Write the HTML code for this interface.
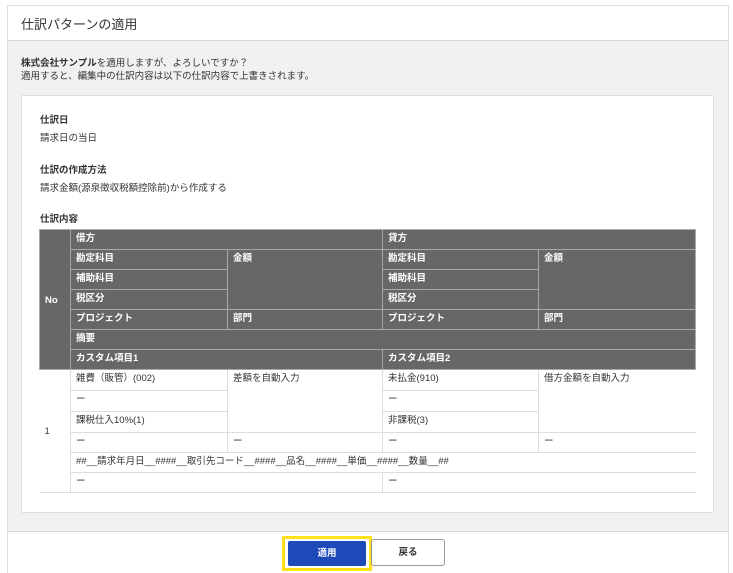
<!DOCTYPE html>
<html><head><meta charset="utf-8"><style>
*{box-sizing:border-box;margin:0;padding:0}
body{width:733px;height:573px;background:#fff;font-family:"Liberation Sans","Noto Sans CJK JP",sans-serif;color:#333;position:relative;overflow:hidden;font-size:9.5px}
.outer{position:absolute;left:7px;top:5px;width:722px;height:568px;border:1px solid #ddd;background:#f1f1f1}
.hd{position:absolute;left:0;top:0;width:720px;height:35px;background:#fff;border-bottom:1px solid #d8d8d8;font-size:13px;padding:8px 0 0 13px;color:#333}
.msg{position:absolute;left:13px;top:51px;font-size:9.5px;line-height:13px}
.card{position:absolute;left:13px;top:89px;width:693px;height:418px;background:#fff;border:1px solid #ddd;border-radius:2px}
.lbl{position:absolute;left:18px;font-size:9.5px;font-weight:bold}
.val{position:absolute;left:18px;font-size:9.5px}
table{position:absolute;left:17px;top:133px;border-collapse:collapse;table-layout:fixed;width:656px}
td{font-size:9.5px;padding:2px 5px 0;vertical-align:top;border:1px solid #ddd;height:20px;line-height:14px}
td.h{background:#676767;color:#fff;font-weight:bold;border:1px solid #a8a8a8}
.ft{position:absolute;left:0;top:525px;width:720px;height:42px;background:#fff;border-top:1px solid #d8d8d8}
.b1{position:absolute;left:274px;top:4px;width:90px;height:35px;border:3px solid #ffe11a;background:#fff}
.b1 div{position:absolute;left:3px;top:2px;width:78px;height:25px;background:#1e49b8;border-radius:2px;color:#fff;font-weight:bold;font-size:9.5px;text-align:center;line-height:25px}
.b2{position:absolute;left:363px;top:7px;width:74px;height:27px;border:1px solid #999;border-radius:3px;background:#fff;font-weight:bold;font-size:9.5px;text-align:center;line-height:25px;color:#333}
</style></head><body>
<div class="outer">
<div class="hd">仕訳パターンの適用</div>
<div class="msg"><b>株式会社サンプル</b>を適用しますが、よろしいですか？<br>適用すると、編集中の仕訳内容は以下の仕訳内容で上書きされます。</div>
<div class="card">
<div class="lbl" style="top:16px">仕訳日</div>
<div class="val" style="top:34px">請求日の当日</div>
<div class="lbl" style="top:66px">仕訳の作成方法</div>
<div class="val" style="top:84px">請求金額(源泉徴収税額控除前)から作成する</div>
<div class="lbl" style="top:115px">仕訳内容</div>
<table>
<colgroup><col style="width:31px"><col style="width:157px"><col style="width:155px"><col style="width:156px"><col style="width:157px"></colgroup>
<tr><td class="h" rowspan="7" style="vertical-align:middle">No</td><td class="h" colspan="2">借方</td><td class="h" colspan="2">貸方</td></tr>
<tr><td class="h">勘定科目</td><td class="h" rowspan="3">金額</td><td class="h">勘定科目</td><td class="h" rowspan="3">金額</td></tr>
<tr><td class="h">補助科目</td><td class="h">補助科目</td></tr>
<tr><td class="h">税区分</td><td class="h">税区分</td></tr>
<tr><td class="h">プロジェクト</td><td class="h">部門</td><td class="h">プロジェクト</td><td class="h">部門</td></tr>
<tr><td class="h" colspan="4">摘要</td></tr>
<tr><td class="h" colspan="2">カスタム項目1</td><td class="h" colspan="2">カスタム項目2</td></tr>
<tr><td rowspan="6" style="vertical-align:middle;border-left:none">1</td><td style="height:21px">雑費（販管）(002)</td><td rowspan="3">差額を自動入力</td><td>未払金(910)</td><td rowspan="3" style="border-right:none">借方金額を自動入力</td></tr>
<tr><td style="height:21px">ー</td><td>ー</td></tr>
<tr><td style="height:21px">課税仕入10%(1)</td><td>非課税(3)</td></tr>
<tr><td>ー</td><td>ー</td><td>ー</td><td style="border-right:none">ー</td></tr>
<tr><td colspan="4" style="border-right:none">##__請求年月日__####__取引先コード__####__品名__####__単価__####__数量__##</td></tr>
<tr><td colspan="2">ー</td><td colspan="2" style="border-right:none">ー</td></tr>
</table>
</div>
<div class="ft"><div class="b1"><div>適用</div></div><div class="b2">戻る</div></div>
</div>
</body></html>
